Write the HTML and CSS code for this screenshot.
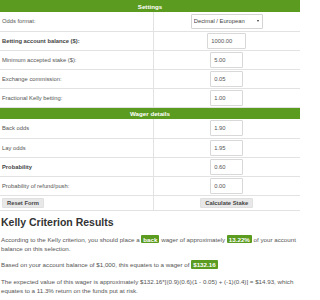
FILE: index.html
```html
<!DOCTYPE html>
<html>
<head>
<meta charset="utf-8">
<link rel="stylesheet" href="styles.css">
</head>
<body>
<table class="calc">
  <colgroup><col class="lbl"><col class="valcol"></colgroup>
  <tr><th colspan="2">Settings</th></tr>
  <tr><td>Odds format:</td><td class="val"><span class="sel"><select class="fmt"><option>Decimal / European</option></select></span></td></tr>
  <tr><td class="strong">Betting account balance ($):</td><td class="val"><input class="num wide" type="text" value="1000.00"></td></tr>
  <tr><td>Minimum accepted stake ($):</td><td class="val"><input class="num" type="text" value="5.00"></td></tr>
  <tr><td>Exchange commission:</td><td class="val"><input class="num" type="text" value="0.05"></td></tr>
  <tr><td>Fractional Kelly betting:</td><td class="val"><input class="num" type="text" value="1.00"></td></tr>
  <tr><th colspan="2">Wager details</th></tr>
  <tr><td>Back odds</td><td class="val"><input class="num" type="text" value="1.90"></td></tr>
  <tr><td>Lay odds</td><td class="val"><input class="num" type="text" value="1.95"></td></tr>
  <tr><td class="strong">Probability</td><td class="val"><input class="num" type="text" value="0.60"></td></tr>
  <tr><td>Probability of refund/push:</td><td class="val"><input class="num" type="text" value="0.00"></td></tr>
  <tr class="btns"><td><button class="btn" type="button">Reset Form</button></td><td class="val"><button class="btn" type="button">Calculate Stake</button></td></tr>
</table>
<section class="results">
  <h2>Kelly Criterion Results</h2>
  <p>According to the Kelly criterion, you should place a <span class="badge">back</span> wager of approximately <span class="badge">13.22%</span> of your account balance on this selection.</p>
  <p>Based on your account balance of $1,000, this equates to a wager of <span class="badge">$132.16</span></p>
  <p>The expected value of this wager is approximately $132.16*[(0.9)(0.6)(1 - 0.05) + (-1)(0.4)] = $14.93, which equates to a 11.3% return on the funds put at risk.</p>
</section>
</body>
</html>
```
FILE: styles.css
```css
* { box-sizing: border-box; }
html, body { margin: 0; padding: 0; background: #fff; }
body {
  font-family: "Liberation Sans", Arial, sans-serif;
  font-size: 5.8px;
  color: #555;
  width: 300px;
  overflow: hidden;
}
.calc {
  width: 300px;
  border-collapse: collapse;
  table-layout: fixed;
}
.calc col.lbl { width: 153px; }
.calc th {
  background: #5b9b1f;
  color: #fff;
  font-weight: bold;
  font-size: 6.2px;
  height: 12px;
  padding: 0;
  text-align: center;
}
.calc td {
  height: 19px;
  padding: 0 2px;
  border-bottom: 1px solid #e2e2e2;
  vertical-align: middle;
}
.calc td.val {
  border-left: 1px solid #e2e2e2;
  text-align: center;
}
.calc td.strong { font-weight: bold; color: #444; }
.calc tr.btns td { height: 15px; padding-top: 1px; }
.sel {
  position: relative;
  display: inline-block;
  vertical-align: middle;
}
.fmt {
  -webkit-appearance: none;
  appearance: none;
  width: 72px;
  height: 15px;
  margin: 0;
  padding: 0 0 0 2px;
  border: 1px solid #d4d4d4;
  border-radius: 1px;
  background: #fff;
  font-family: "Liberation Sans", Arial, sans-serif;
  font-size: 5.8px;
  color: #444;
}
.sel::after {
  content: "";
  position: absolute;
  right: 4px;
  top: 6.5px;
  border-left: 1.6px solid transparent;
  border-right: 1.6px solid transparent;
  border-top: 2px solid #333;
}
.num {
  width: 33px;
  height: 16px;
  margin: 0;
  padding: 0 0 0 3px;
  border: 1px solid #d8d8d8;
  border-radius: 1px;
  font-family: "Liberation Sans", Arial, sans-serif;
  font-size: 5.8px;
  color: #555;
  vertical-align: middle;
  text-align: left;
}
.num.wide { width: 39px; }
.btn {
  height: 10px;
  margin: 0;
  padding: 0 4px;
  border: 1px solid #e0e0e0;
  border-radius: 1px;
  background: #e8e8e8;
  font-family: "Liberation Sans", Arial, sans-serif;
  font-size: 5.8px;
  font-weight: bold;
  color: #444;
  line-height: 8px;
  vertical-align: middle;
}
.results { padding: 0 1px; }
.results h2 {
  margin: 5px 0 7px;
  font-size: 10.5px;
  line-height: 12px;
  font-weight: bold;
  color: #333;
}
.results p {
  margin: 0 0 7.5px;
  font-size: 6.2px;
  line-height: 9px;
}
.badge {
  background: #5b9b1f;
  color: #fff;
  font-weight: bold;
  padding: 0.8px 2px;
  border-radius: 1px;
}
```
